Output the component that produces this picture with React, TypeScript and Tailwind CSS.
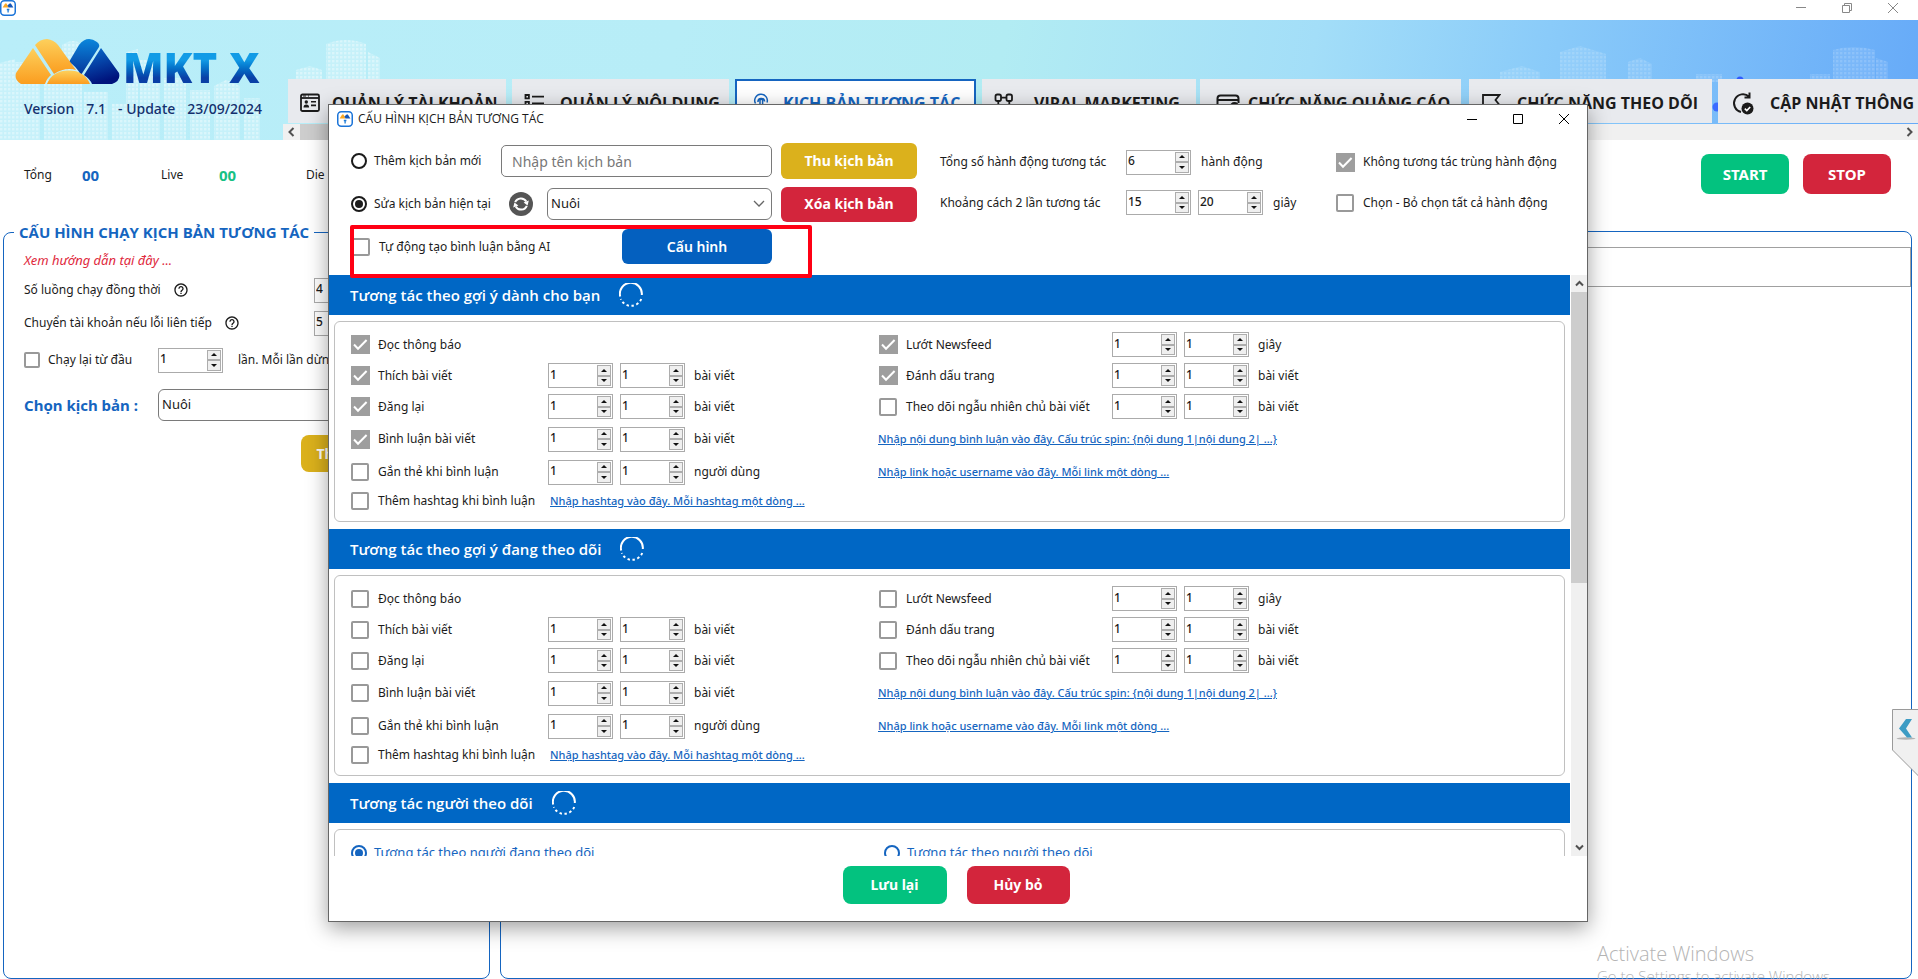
import React from "react";
import { MdHelpOutline } from "react-icons/md";

type SpinProps = { value: string; label: string };

function Spin({ value, label }: SpinProps) {
  return (
    <div className="flex h-[25px] w-[65px] shrink-0 border border-[#ababab] bg-white p-px">
      <input
        aria-label={label}
        defaultValue={value}
        inputMode="numeric"
        className="min-w-0 flex-1 bg-transparent pb-0.5 text-xs font-medium text-[#1b1b1b] outline-none"
      />
      <span className="flex w-3.5 flex-col">
        <button
          type="button"
          aria-label={label + " +"}
          className="flex flex-1 items-center justify-center border border-[#adadad] bg-[#efefef]"
        >
          <svg viewBox="0 0 6 3" className="h-[3px] w-1.5">
            <path d="M0 3L3 0l3 3z" fill="#111" />
          </svg>
        </button>
        <button
          type="button"
          aria-label={label + " -"}
          className="flex flex-1 items-center justify-center border border-[#adadad] bg-[#efefef]"
        >
          <svg viewBox="0 0 6 3" className="h-[3px] w-1.5">
            <path d="M0 0l3 3 3-3z" fill="#111" />
          </svg>
        </button>
      </span>
    </div>
  );
}

function Check({ label, checked = false, small = false }: { label: string; checked?: boolean; small?: boolean }) {
  return (
    <label className="flex items-center gap-2 whitespace-nowrap">
      <span className={small ? "grid size-4 shrink-0 place-items-center" : "grid size-5 shrink-0 place-items-center"}>
        <input
          type="checkbox"
          defaultChecked={checked}
          className={
            (small ? "size-4" : "size-[18px] checked:size-[19px]") +
            " peer col-start-1 row-start-1 appearance-none rounded-[2px] border-2 border-[#999] bg-white checked:rounded-none checked:border-0 checked:bg-[#9e9e9e]"
          }
        />
        <svg
          viewBox="0 0 19 19"
          className="pointer-events-none col-start-1 row-start-1 hidden size-[19px] peer-checked:block"
        >
          <path d="M3 9.5l4 4.2L15.6 5" fill="none" stroke="#fff" strokeWidth="2" />
        </svg>
      </span>
      <span>{label}</span>
    </label>
  );
}

function Radio({
  label,
  name,
  checked = false,
  blue = false,
}: {
  label: string;
  name: string;
  checked?: boolean;
  blue?: boolean;
}) {
  return (
    <label
      className={
        blue
          ? "flex items-center gap-[7px] whitespace-nowrap text-[#1565c0]"
          : "flex items-center gap-[7px] whitespace-nowrap"
      }
    >
      <input
        type="radio"
        name={name}
        defaultChecked={checked}
        className="size-4 shrink-0 appearance-none rounded-full border-2 border-current bg-white bg-clip-content p-0.5 checked:bg-current"
      />
      <span>{label}</span>
    </label>
  );
}

function AppIcon() {
  return (
    <svg viewBox="0 0 16 16" className="size-4 shrink-0">
      <rect x="0.75" y="0.75" width="14.5" height="14.5" rx="3.5" fill="#fff" stroke="#1b74d8" strokeWidth="1.5" />
      <path d="M2.6 7.6L5 3.8q.9-.9 1.7 0L8.6 7.6z" fill="#f9a826" />
      <path d="M7.4 5.6L9.3 3.8q.9-.9 1.7 0l2.4 3.8H8.6z" fill="#1557b8" />
      <path d="M6.8 9.5h2.6M8.1 9.5v3" stroke="#1e7bd6" strokeWidth="1.3" />
    </svg>
  );
}

function Logo() {
  return (
    <svg viewBox="0 0 105 46" className="h-[46px] w-[105px] shrink-0">
      <defs>
        <linearGradient id="lg-orange" x1="0" y1="0" x2="0" y2="1">
          <stop offset="0" stopColor="#fdd05c" />
          <stop offset="1" stopColor="#fb9d1f" />
        </linearGradient>
        <linearGradient id="lg-blue" x1="0" y1="0" x2="0" y2="1">
          <stop offset="0" stopColor="#0a86dc" />
          <stop offset="1" stopColor="#05359a" />
        </linearGradient>
        <linearGradient id="lg-navy" x1="0" y1="0" x2="0.3" y2="1">
          <stop offset="0" stopColor="#0a6fcf" />
          <stop offset="1" stopColor="#00137c" />
        </linearGradient>
      </defs>
      <path d="M54 23L64 6q8-10 18-3 3 2 2 5L66 36q-5-9-12-13z" fill="url(#lg-blue)" />
      <path d="M20 6q5-6 12-6 7 1 11 6l18 25q-11-3-22 4z" fill="url(#lg-orange)" />
      <path d="M18 9L36 36q-4 3-6 9H6q-7-4-5-11z" fill="url(#lg-orange)" />
      <path d="M32 45q5-13 21-13.5t22 13.5z" fill="url(#lg-orange)" />
      <path d="M86 9l18 25q2 8-7 11H77q-2-5-8-9z" fill="url(#lg-navy)" />
    </svg>
  );
}

function Skyline() {
  return (
    <svg className="absolute inset-0 h-full w-full" preserveAspectRatio="none" viewBox="0 0 1918 120">
      <defs>
        <pattern id="win" width="4" height="4" patternUnits="userSpaceOnUse">
          <rect width="4" height="4" fill="#fff" fillOpacity="0.2" />
          <rect width="2.4" height="2.4" fill="#fff" fillOpacity="0.35" />
        </pattern>
      </defs>
      <g fill="url(#win)">
        <path d="M0 43l15-4v81H0zM14 42h26v78H14zM44 60h24v60H44zM62 25q12-8 20 0v95H62zM84 72h24v48H84zM112 84h20v36h-20zM126 32l12-3v91h-12zM140 40h20v80h-20zM164 58h22v62h-22zM190 70h20v50h-20zM214 66l12-6 14 6v54h-26zM244 78h16v42h-16z" />
        <path d="M296 50l14-4 12 4v10h-26zM326 24q20-8 40 0v36h-40zM368 32l12 6v22h-12z" />
        <path d="M1500 52l22-6 18 6v8h-40zM1560 32l20-6 26 8v26h-46zM1628 42l12-4 12 6v16h-24zM1696 54h26v8h-26zM1810 54h20v6h-20zM1833 30q20-6 42 0v30h-42zM1876 38l12 4v18h-12z" opacity="0.45" />
      </g>
      <circle cx="1740" cy="60" r="3.5" fill="#2f5bff" />
      <circle cx="1717" cy="87" r="4.5" fill="#3b6bff" />
    </svg>
  );
}

const stroke = { fill: "none", stroke: "currentColor", strokeWidth: 1.8 } as const;

const icons = {
  account: (
    <svg viewBox="0 0 20 20" className="size-5 shrink-0">
      <rect x="1" y="1.5" width="18" height="16.5" rx="1.5" {...stroke} />
      <path d="M1 5h18" {...stroke} />
      <circle cx="6.3" cy="9" r="1.7" fill="currentColor" />
      <path d="M3.5 14.5q0-3 2.8-3t2.8 3zM11 8h5v1.6h-5zM11 11.6h5v1.6h-5z" fill="currentColor" />
      <path d="M3 3h3M8 3h1" stroke="currentColor" />
    </svg>
  ),
  list: (
    <svg viewBox="0 0 20 20" className="size-5 shrink-0">
      <path d="M1.5 2h3.4v3.4H1.5zM1.5 8.8h3.4v3.4H1.5zM1.5 15.4h3.4v3H1.5zM8 3.7h12M8 10.5h12M8 17h12" {...stroke} />
    </svg>
  ),
  touch: (
    <svg viewBox="0 0 20 20" className="size-5 shrink-0">
      <path
        d="M4.5 10.5a6.3 6.3 0 1 1 11.5-1M7 9a3.3 3.3 0 1 1 6.6-.5M9 14.5V7.6a1.3 1.3 0 0 1 2.6 0v5l4 1v3l-1 3H9.5L6 14.6z"
        {...stroke}
        strokeWidth={1.5}
      />
    </svg>
  ),
  nodes: (
    <svg viewBox="0 0 20 20" className="size-5 shrink-0">
      <rect x="1.5" y="1.5" width="5.5" height="6.5" rx="1.8" {...stroke} />
      <rect x="12.5" y="1.5" width="5.5" height="6.5" rx="1.8" {...stroke} />
      <path d="M7 4.7h5.5M4.3 8v5M15.3 8v5M2 13h5v5H2zM13 13h5v5h-5z" {...stroke} />
    </svg>
  ),
  card: (
    <svg viewBox="0 0 24 20" className="h-5 w-6 shrink-0">
      <path d="M22.5 10V5.5q0-3-3-3h-15q-3 0-3 3v9q0 3 3 3H13M2 7h20" {...stroke} strokeWidth={2} />
      <circle cx="18.5" cy="14" r="4" {...stroke} />
    </svg>
  ),
  flag: (
    <svg viewBox="0 0 20 20" className="size-5 shrink-0">
      <path d="M2 20V2h16.5l-4 5 4 5H2" {...stroke} />
    </svg>
  ),
  update: (
    <svg viewBox="0 0 24 24" className="size-6 shrink-0">
      <path d="M19 5.5A9 9 0 1 0 11 21M19.5 1.5v5h-5" {...stroke} strokeWidth={2} />
      <circle cx="17.5" cy="17.5" r="6" fill="currentColor" />
      <path d="M14.8 17.6l2 2 3.4-3.6" stroke="#fff" strokeWidth="1.6" fill="none" />
    </svg>
  ),
};

type Tab = { icon: React.ReactNode; text: string; box: string; active?: boolean };

const tabs: Tab[] = [
  { icon: icons.account, text: "QUẢN LÝ TÀI KHOẢN", box: "w-[218px] pl-3 gap-3 mr-1.5" },
  { icon: icons.list, text: "QUẢN LÝ NỘI DUNG", box: "w-[217px] pl-3 gap-4 mr-1.5" },
  { icon: icons.touch, text: "KỊCH BẢN TƯƠNG TÁC", box: "w-[241px] pl-3.5 gap-3 mr-1.5", active: true },
  { icon: icons.nodes, text: "VIRAL MARKETING", box: "w-[214px] pl-3 gap-5 mr-1" },
  { icon: icons.card, text: "CHỨC NĂNG QUẢNG CÁO", box: "w-[261px] pl-4 gap-2 mr-2" },
  { icon: icons.flag, text: "CHỨC NĂNG THEO DÕI", box: "w-[243px] pl-3 gap-4 mr-1.5" },
  { icon: icons.update, text: "CẬP NHẬT THÔNG TIN", box: "w-[240px] pl-3 gap-4" },
];

function Spinner() {
  return (
    <svg viewBox="0 0 24 24" className="size-6">
      <path d="M1.2 13.5A11 11 0 1 1 22.8 12" fill="none" stroke="#fff" strokeWidth="2" />
      <path d="M22.2 16A11 11 0 0 1 1.8 16" fill="none" stroke="#fff" strokeWidth="2" strokeDasharray="2.4 2.6" />
    </svg>
  );
}

function SectionHeader({ title }: { title: string }) {
  return (
    <h2 className="flex h-10 shrink-0 items-center gap-[19px] bg-[#0067c5] pl-[21px] font-['Open_Sans',sans-serif] text-[15px] font-semibold text-white">
      {title}
      <Spinner />
    </h2>
  );
}

function Pair({ name, unit }: { name: string; unit: string }) {
  return (
    <div className="flex items-center gap-[7px] whitespace-nowrap">
      <Spin value="1" label={name + " từ"} />
      <Spin value="1" label={name + " đến"} />
      <span className="pl-0.5">{unit}</span>
    </div>
  );
}

function LinkText({ children }: { children: React.ReactNode }) {
  return (
    <a href="#" className="text-[11px] font-medium whitespace-nowrap text-[#1565c0] underline">
      {children}
    </a>
  );
}

function Actions({ on }: { on: boolean }) {
  return (
    <div className="mx-[5px] mt-1.5 mb-[7px] grid shrink-0 grid-cols-[198px_330px_234px_1fr] grid-rows-[31px_31px_31px_34px_32px_26px] items-center rounded-md border border-[#c0c0c0] pt-[7px] pb-[7px] pl-[15px]">
      <div className="col-span-2">
        <Check label="Đọc thông báo" checked={on} />
      </div>
      <Check label="Lướt Newsfeed" checked={on} />
      <Pair name="Lướt Newsfeed" unit="giây" />

      <Check label="Thích bài viết" checked={on} />
      <Pair name="Thích bài viết" unit="bài viết" />
      <Check label="Đánh dấu trang" checked={on} />
      <Pair name="Đánh dấu trang" unit="bài viết" />

      <Check label="Đăng lại" checked={on} />
      <Pair name="Đăng lại" unit="bài viết" />
      <Check label="Theo dõi ngẫu nhiên chủ bài viết" />
      <Pair name="Theo dõi ngẫu nhiên" unit="bài viết" />

      <Check label="Bình luận bài viết" checked={on} />
      <Pair name="Bình luận bài viết" unit="bài viết" />
      <div className="col-span-2">
        <LinkText>{"Nhập nội dung bình luận vào đây. Cấu trúc spin: {nội dung 1|nội dung 2| ...}"}</LinkText>
      </div>

      <Check label="Gắn thẻ khi bình luận" />
      <Pair name="Gắn thẻ" unit="người dùng" />
      <div className="col-span-2">
        <LinkText>Nhập link hoặc username vào đây. Mỗi link một dòng ...</LinkText>
      </div>

      <Check label="Thêm hashtag khi bình luận" />
      <div className="col-span-3 pl-0.5">
        <LinkText>Nhập hashtag vào đây. Mỗi hashtag một dòng ...</LinkText>
      </div>
    </div>
  );
}

function ScriptSelect({ label }: { label: string }) {
  return (
    <div className="grid min-w-0 flex-1 items-center">
      <select
        aria-label={label}
        className="col-start-1 row-start-1 h-8 w-full appearance-none rounded-md border border-[#7a7a7a] bg-white pl-[3px] text-[13px]"
      >
        <option>Nuôi</option>
      </select>
      <svg viewBox="0 0 12 8" className="pointer-events-none col-start-1 row-start-1 mr-[7px] h-2 w-3 justify-self-end">
        <path d="M1 1l5 5 5-5" fill="none" stroke="#666" strokeWidth="1.3" />
      </svg>
    </div>
  );
}

function Dialog() {
  return (
    <section
      role="dialog"
      aria-label="Cấu hình kịch bản tương tác"
      className="absolute top-[104px] right-[330px] bottom-[57px] left-[328px] flex flex-col border border-[#666] bg-white shadow-[0_6px_20px_rgba(0,0,0,0.38)]"
    >
      <header className="flex h-7 shrink-0 items-center gap-[5px] pr-[17px] pl-2">
        <AppIcon />
        <h1 className="flex-1 font-['Open_Sans',sans-serif] text-xs">CẤU HÌNH KỊCH BẢN TƯƠNG TÁC</h1>
        <div className="flex items-center gap-[34px]">
          <button type="button" aria-label="Thu nhỏ" className="size-3">
            <svg viewBox="0 0 12 12" className="size-3"><path d="M1 6.5h10" stroke="#000" /></svg>
          </button>
          <button type="button" aria-label="Phóng to" className="size-3">
            <svg viewBox="0 0 12 12" className="size-3"><path d="M1.5 1.5h9v9h-9z" fill="none" stroke="#000" /></svg>
          </button>
          <button type="button" aria-label="Đóng" className="size-3">
            <svg viewBox="0 0 12 12" className="size-3"><path d="M1 1l10 10M11 1L1 11" stroke="#000" /></svg>
          </button>
        </div>
      </header>

      <div className="flex shrink-0 items-start pt-[9px] pl-[22px]">
        <div className="w-[566px]">
          <div className="flex h-[38px] items-center">
            <div className="w-[150px]">
              <Radio name="mode" label="Thêm kịch bản mới" />
            </div>
            <input
              aria-label="Tên kịch bản"
              placeholder="Nhập tên kịch bản"
              className="mr-[9px] h-8 min-w-0 flex-1 rounded-[5px] border border-[#7a7a7a] pl-2.5 text-sm outline-none placeholder:text-[#777]"
            />
            <button type="button" className="h-9 w-[136px] rounded-md bg-[#dbb11c] text-sm font-bold text-white">
              Thu kịch bản
            </button>
          </div>
          <div className="mt-1 flex h-10 items-center">
            <div className="w-[158px]">
              <Radio name="mode" label="Sửa kịch bản hiện tại" checked />
            </div>
            <button type="button" aria-label="Tải lại" className="mr-3.5 size-6">
              <svg viewBox="0 0 24 24" className="size-6">
                <circle cx="12" cy="12" r="12" fill="#555" />
                <path d="M6.2 10.2A6.2 6.2 0 0 1 17.3 9.5M17.8 13.8A6.2 6.2 0 0 1 6.7 14.5" fill="none" stroke="#fff" strokeWidth="2" />
                <path d="M19.8 8.6l-1.2 5-4-3.2zM4.2 15.4l1.2-5 4 3.2z" fill="#fff" />
              </svg>
            </button>
            <ScriptSelect label="Kịch bản" />
            <button type="button" className="ml-[9px] h-[35px] w-[136px] rounded-md bg-[#d3253c] text-sm font-bold text-white">
              Xóa kịch bản
            </button>
          </div>
          <div className="flex h-[45px] items-center">
            <div className="w-[271px]">
              <Check label="Tự động tạo bình luận bằng AI" />
            </div>
            <button type="button" className="h-[35px] w-[150px] rounded-md bg-[#0460bf] text-sm font-semibold text-white">
              Cấu hình
            </button>
          </div>
        </div>
        <div className="flex-1 pl-[23px]">
          <div className="flex h-10 items-center">
            <span className="w-[186px] whitespace-nowrap">Tổng số hành động tương tác</span>
            <Spin value="6" label="Tổng số hành động" />
            <span className="w-[144px] pl-2.5">hành động</span>
            <Check label="Không tương tác trùng hành động" checked />
          </div>
          <div className="flex h-[41px] items-center">
            <span className="w-[186px] whitespace-nowrap">Khoảng cách 2 lần tương tác</span>
            <Spin value="15" label="Khoảng cách từ" />
            <span className="w-[7px]" />
            <Spin value="20" label="Khoảng cách đến" />
            <span className="w-[72px] pl-2.5">giây</span>
            <Check label="Chọn - Bỏ chọn tất cả hành động" />
          </div>
        </div>
      </div>

      <div className="mt-[6px] flex min-h-0 flex-1">
        <div className="flex min-h-0 flex-1 flex-col overflow-hidden">
          <SectionHeader title="Tương tác theo gợi ý dành cho bạn" />
          <Actions on />
          <SectionHeader title="Tương tác theo gợi ý đang theo dõi" />
          <Actions on={false} />
          <SectionHeader title="Tương tác người theo dõi" />
          <div className="mx-[5px] mt-1.5 grid h-60 shrink-0 grid-cols-[533px_1fr] content-start rounded-md border border-[#c0c0c0] pt-3.5 pl-4 text-[13px]">
            <Radio name="follow" label="Tương tác theo người đang theo dõi" checked blue />
            <Radio name="follow" label="Tương tác theo người theo dõi" blue />
          </div>
        </div>
        <div className="ml-px flex w-4 flex-col items-center bg-[#f0f0f0]">
          <svg viewBox="0 0 17 17" className="size-[17px] shrink-0">
            <path d="M5 10.5L8.5 7l3.5 3.5" fill="none" stroke="#505050" strokeWidth="2" />
          </svg>
          <div className="h-[291px] w-full bg-[#cdcdcd]" />
          <svg viewBox="0 0 17 17" className="mt-auto size-[17px] shrink-0">
            <path d="M5 6.5L8.5 10 12 6.5" fill="none" stroke="#505050" strokeWidth="2" />
          </svg>
        </div>
      </div>

      <footer className="flex h-[65px] shrink-0 items-start justify-center gap-5 pt-2.5 pr-1">
        <button type="button" className="h-[38px] w-[104px] rounded-lg bg-[#03c27f] text-sm font-bold text-white">
          Lưu lại
        </button>
        <button type="button" className="h-[38px] w-[103px] rounded-lg bg-[#d3253c] text-sm font-bold text-white">
          Hủy bỏ
        </button>
      </footer>

      <div className="pointer-events-none absolute top-[120px] left-[21px] h-[53px] w-[462px] rounded-[2px] border-4 border-[#ff0014]" />
    </section>
  );
}

export default function App() {
  return (
    <div className="relative flex h-screen flex-col overflow-hidden bg-white font-['Noto_Sans','Open_Sans',sans-serif] text-xs text-[#1b1b1b]">
      <header className="flex h-5 shrink-0 items-start justify-between pr-[19px]">
        <AppIcon />
        <div className="flex gap-[34px] pt-0.5">
          <button type="button" aria-label="Thu nhỏ cửa sổ" className="size-3">
            <svg viewBox="0 0 12 12" className="size-3"><path d="M1 5.5h10" stroke="#888" /></svg>
          </button>
          <button type="button" aria-label="Khôi phục cửa sổ" className="size-3">
            <svg viewBox="0 0 12 12" className="size-3">
              <path d="M1.5 3.5h7v7h-7zM3.5 3.5v-2h7v7h-2" fill="none" stroke="#888" />
            </svg>
          </button>
          <button type="button" aria-label="Đóng cửa sổ" className="size-3">
            <svg viewBox="0 0 12 12" className="size-3"><path d="M1 1l10 10M11 1L1 11" stroke="#888" /></svg>
          </button>
        </div>
      </header>

      <div className="relative flex h-[120px] shrink-0 bg-[linear-gradient(100deg,#b9eef9_0%,#b7edf7_35%,#b2ecf3_52%,#a3def8_68%,#8acbf9_80%,#66aaf8_100%)]">
        <Skyline />
        <div className="relative w-[283px] shrink-0 pt-[19px] pl-[15px]">
          <div className="flex items-end gap-[3px]">
            <Logo />
            <div className="flex gap-3 font-['Open_Sans',sans-serif] text-[42px] leading-9 font-extrabold text-transparent">
              <span className="bg-linear-to-b from-[#129be6] from-30% to-[#0a3fa6] to-80% bg-clip-text">MKT</span>
              <span className="bg-linear-to-b from-[#129be6] from-30% to-[#0a3fa6] to-80% bg-clip-text">X</span>
            </div>
          </div>
          <p className="mt-3 flex gap-3 pt-0.5 pl-[9px] text-sm font-medium whitespace-nowrap text-[#14306e]">
            <span>Version</span>
            <span>7.1</span>
            <span>- Update</span>
            <span>23/09/2024</span>
          </p>
        </div>
        <div className="relative flex min-w-0 flex-1 flex-col overflow-hidden pt-[59px]">
          <nav className="flex pl-[5px] font-['Open_Sans',sans-serif]">
            {tabs.map((t) => (
              <button
                key={t.text}
                type="button"
                className={
                  (t.active
                    ? "border-2 border-[#1565c0] bg-white text-[#1565c0] "
                    : "bg-[#e8eaee] text-[#1b1b1b] ") +
                  "flex h-11 shrink-0 items-center overflow-hidden pt-1 text-base font-bold whitespace-nowrap " +
                  t.box
                }
              >
                {t.icon}
                {t.text}
              </button>
            ))}
          </nav>
          <div className="mt-px flex h-4 items-center bg-[#f0f0f0]">
            <svg viewBox="0 0 17 16" className="h-4 w-[17px]">
              <path d="M10.5 4L6.5 8l4 4" fill="none" stroke="#505050" strokeWidth="2" />
            </svg>
            <div className="h-full w-[700px] bg-[#cdcdcd]" />
            <svg viewBox="0 0 17 16" className="ml-auto h-4 w-[17px]">
              <path d="M6.5 4l4 4-4 4" fill="none" stroke="#505050" strokeWidth="2" />
            </svg>
          </div>
        </div>
      </div>

      <div className="flex h-[70px] shrink-0 items-center pl-6">
        <span className="w-[58px]">Tổng</span>
        <b className="w-[79px] text-[15px] text-[#1565c0]">00</b>
        <span className="w-[58px]">Live</span>
        <b className="w-[87px] text-[15px] text-[#17c184]">00</b>
        <span>Die</span>
        <div className="ml-auto flex gap-3.5 pr-[27px] pb-0.5">
          <button type="button" className="h-10 w-[88px] rounded-lg bg-[#03c27f] text-[15px] font-bold text-white">
            START
          </button>
          <button type="button" className="h-10 w-[88px] rounded-lg bg-[#d3253c] text-[15px] font-bold text-white">
            STOP
          </button>
        </div>
      </div>

      <main className="flex min-h-0 flex-1 gap-2.5 pt-3 pr-1.5 pl-[3px]">
        <fieldset className="w-[487px] min-w-0 rounded-lg border border-[#1565c0]">
          <legend className="ml-2.5 px-[5px] font-['Open_Sans',sans-serif] text-[15px] leading-5 font-bold whitespace-nowrap text-[#1565c0]">
            CẤU HÌNH CHẠY KỊCH BẢN TƯƠNG TÁC
          </legend>
          <div className="flex flex-col pl-5">
            <a href="#" className="flex h-8 items-center pt-1.5 text-[13px] text-[#e0283c] italic">
              Xem hướng dẫn tại đây ...
            </a>
            <div className="flex h-8 items-center">
              <span className="flex flex-1 items-center gap-3">
                Số luồng chạy đồng thời <MdHelpOutline className="size-4" />
              </span>
              <span className="mr-[110px]"><Spin value="4" label="Số luồng" /></span>
            </div>
            <div className="flex h-[34px] items-center">
              <span className="flex flex-1 items-center gap-3">
                Chuyển tài khoản nếu lỗi liên tiếp <MdHelpOutline className="size-4" />
              </span>
              <span className="mr-[110px]"><Spin value="5" label="Số lỗi liên tiếp" /></span>
            </div>
            <div className="flex h-10 items-center">
              <span className="w-[134px]"><Check label="Chạy lại từ đầu" small /></span>
              <Spin value="1" label="Số lần chạy lại" />
              <span className="pl-[15px] whitespace-nowrap">lần. Mỗi lần dừng</span>
            </div>
            <div className="flex h-[50px] items-center pr-4">
              <b className="w-[134px] text-[15px] text-[#1565c0]">Chọn kịch bản :</b>
              <ScriptSelect label="Chọn kịch bản" />
            </div>
            <button
              type="button"
              className="mt-[5px] ml-[277px] h-[37px] w-[120px] rounded-lg bg-[#dbb11c] text-sm font-bold text-white"
            >
              Thu kịch bản
            </button>
          </div>
        </fieldset>
        <section className="mt-[9px] flex-1 rounded-lg border border-[#1565c0] pt-[15px] pl-px">
          <div className="h-10 border border-[#a0a0a0]" />
        </section>
      </main>

      <button type="button" aria-label="Mở bảng bên" className="absolute top-[709px] right-0 h-[67px] w-[26px]">
        <svg viewBox="0 0 26 67" className="h-[67px] w-[26px]">
          <path d="M27 .5H.5V41L27 67.5z" fill="#f0f0f0" stroke="#9a9a9a" />
          <ellipse cx="14" cy="29.5" rx="9.5" ry="1.2" fill="#999" opacity="0.7" />
          <path d="M14 10h6l-6 9.5 6 9h-5L7 19.5z" fill="#3d9cc4" />
        </svg>
      </button>

      <div className="absolute top-[940px] right-[132px] w-[189px] font-['Open_Sans',sans-serif] whitespace-nowrap text-[#b4b4b4]">
        <p className="text-xl leading-7 font-light">Activate Windows</p>
        <p className="text-[15px] leading-4 font-light">Go to Settings to activate Windows.</p>
      </div>

      <Dialog />
    </div>
  );
}
